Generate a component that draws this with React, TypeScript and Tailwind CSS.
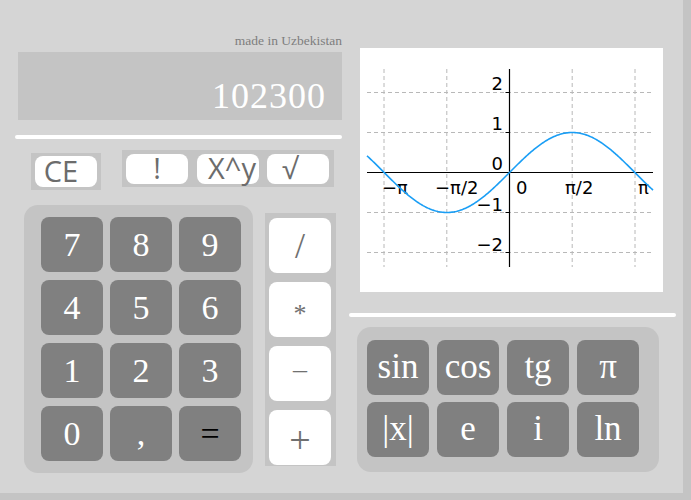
import React from 'react';

const serif = "font-['Liberation_Serif','DejaVu_Serif',serif]";
const sans = "font-['Open_Sans','Noto_Sans',sans-serif]";

const digits: { label: string; dark?: boolean }[] = [
  { label: '7' }, { label: '8' }, { label: '9' },
  { label: '4' }, { label: '5' }, { label: '6' },
  { label: '1' }, { label: '2' }, { label: '3' },
  { label: '0' }, { label: ',' }, { label: '=', dark: true },
];

const funcs = ['sin', 'cos', 'tg', 'π', '|x|', 'e', 'i', 'ln'];

// sine plot, local coordinates of the white box
const Graph: React.FC = () => {
  const ox = 149.5;
  const oy = 124.5;
  const ux = 39.9;
  const uy = 40;
  let d = '';
  for (let x = 7; x <= 293; x += 1) {
    const y = oy - uy * Math.sin((x - ox) / ux);
    d += (x === 7 ? 'M' : 'L') + x + ' ' + y.toFixed(2) + ' ';
  }
  const vx = [24, 86.8, 212.2, 275];
  const hy = [44.5, 84.5, 164.5, 204.5];
  return (
    <svg width="303" height="244" viewBox="0 0 303 244" className="block">
      {vx.map((x) => (
        <line key={'v' + x} x1={x} y1={21} x2={x} y2={219} stroke="#b8b8b8" strokeWidth="1" strokeDasharray="4 3" />
      ))}
      {hy.map((y) => (
        <line key={'h' + y} x1={7} y1={y} x2={293} y2={y} stroke="#b8b8b8" strokeWidth="1" strokeDasharray="4 3" />
      ))}
      <line x1={7} y1={oy} x2={293} y2={oy} stroke="#000" strokeWidth="1.2" />
      <line x1={ox} y1={21} x2={ox} y2={219} stroke="#000" strokeWidth="1.2" />
      {hy.map((y) => (
        <line key={'t' + y} x1={ox - 4} y1={y} x2={ox} y2={y} stroke="#000" strokeWidth="1" />
      ))}
      <g fontFamily="DejaVu Sans, sans-serif" fontSize="18" fill="#000">
        <text x={143} y={42} textAnchor="end">2</text>
        <text x={143} y={82} textAnchor="end">1</text>
        <text x={143} y={122} textAnchor="end">0</text>
        <text x={143} y={163} textAnchor="end">−1</text>
        <text x={143} y={203} textAnchor="end">−2</text>
        <text x={22} y={146}>−π</text>
        <text x={75} y={146}>−π/2</text>
        <text x={156} y={146}>0</text>
        <text x={205} y={146}>π/2</text>
        <text x={278} y={146}>π</text>
      </g>
      <path d={d} fill="none" stroke="#1a9ef5" strokeWidth="1.6" />
    </svg>
  );
};

const App: React.FC = () => {
  return (
    <div className="min-h-screen w-full bg-[#c4c4c4]">
      <div className="w-[683px] h-[493px] bg-[#d5d5d5] flex">
        {/* Left: display, keys */}
        <div className="w-[349px] shrink-0 pl-[15px] pr-[7px] pt-[33px] flex flex-col">
          <div className={`${serif} text-right text-[13.5px] leading-[16px] text-[#7e7e7e]`}>made in Uzbekistan</div>
          <div className="ml-[3px] mt-[3px] h-[68px] bg-[#c4c4c4] flex items-end justify-end pr-[16px] pb-[4px]">
            <span className={`${serif} text-[36px] leading-[40px] tracking-[1px] text-white`}>102300</span>
          </div>
          <div className="mt-[15px] h-[4px] w-[327px] rounded-full bg-white" />

          <div className="mt-[11px] h-[40px] flex items-start">
            <div className="ml-[16px] mt-[3px] w-[70px] h-[37px] bg-[#c4c4c4] px-[4px] py-[3px]">
              <div className={`${sans} h-[31px] rounded-[8px] bg-white flex items-center justify-center pr-[10px] pb-[3px] text-[29px] leading-none text-[#6c6c6c]`}>
                CE
              </div>
            </div>
            <div className="ml-[21px] w-[212px] h-[37px] bg-[#c4c4c4] flex items-start pl-[4px] pt-[4px]">
              <div className={`${sans} w-[62px] h-[30px] rounded-[8px] bg-white flex items-center justify-center pb-[3px] text-[29px] leading-none text-[#6c6c6c]`}>!</div>
              <div className={`${sans} ml-[9px] w-[62px] h-[30px] rounded-[8px] bg-white flex items-center justify-center pl-[8px] pb-[3px] text-[29px] leading-none text-[#6c6c6c]`}>X^y</div>
              <div className={`${sans} ml-[8px] w-[62px] h-[30px] rounded-[8px] bg-white flex items-center justify-center pr-[16px] pb-[3px] text-[29px] leading-none text-[#6c6c6c]`}>√</div>
            </div>
          </div>

          <div className="mt-[15px] flex items-start">
            <div className="ml-[9px] w-[229px] h-[268px] rounded-[14px] bg-[#c4c4c4] grid grid-cols-[62px_62px_62px] auto-rows-[55px] gap-x-[7px] gap-y-[8px] pl-[17px] pt-[12px]">
              {digits.map((k) => (
                <div
                  key={k.label}
                  className={`${serif} rounded-[8px] bg-[#808080] flex items-center justify-center text-[34px] leading-none ${k.dark ? 'text-black' : 'text-white'}`}
                >
                  {k.label}
                </div>
              ))}
            </div>
            <div className="ml-[12px] mt-[8px] w-[71px] h-[253px] bg-[#c4c4c4] flex flex-col gap-[9px] pl-[4px] pt-[5px]">
              <div className={`${serif} w-[62px] h-[55px] rounded-[8px] bg-white flex items-center justify-center text-[36px] leading-none text-[#707070]`}>/</div>
              <div className={`${serif} w-[62px] h-[55px] rounded-[8px] bg-white flex items-center justify-center text-[26px] leading-none text-[#707070] pt-[8px]`}>*</div>
              <div className={`${serif} w-[62px] h-[55px] rounded-[8px] bg-white flex items-center justify-center text-[28px] leading-none text-[#707070] pb-[10px]`}>–</div>
              <div className={`${serif} w-[62px] h-[55px] rounded-[8px] bg-white flex items-center justify-center text-[38px] leading-none text-[#707070] pt-[4px]`}>+</div>
            </div>
          </div>
        </div>

        {/* Right: graph and functions */}
        <div className="flex flex-col">
          <div className="ml-[11px] mt-[48px] w-[303px] h-[244px] bg-white">
            <Graph />
          </div>
          <div className="mt-[21px] h-[4px] w-[327px] rounded-full bg-white" />
          <div className="ml-[8px] mt-[10px] w-[302px] h-[145px] rounded-[14px] bg-[#c4c4c4] grid grid-cols-[62px_62px_62px_62px] auto-rows-[55px] gap-x-[8px] gap-y-[7px] pl-[10px] pt-[13px]">
            {funcs.map((f) => (
              <div
                key={f}
                className={`${serif} rounded-[8px] bg-[#808080] flex items-center justify-center text-[35px] leading-none text-white pb-[2px]`}
              >
                {f}
              </div>
            ))}
          </div>
        </div>
      </div>
    </div>
  );
};

export default App;
